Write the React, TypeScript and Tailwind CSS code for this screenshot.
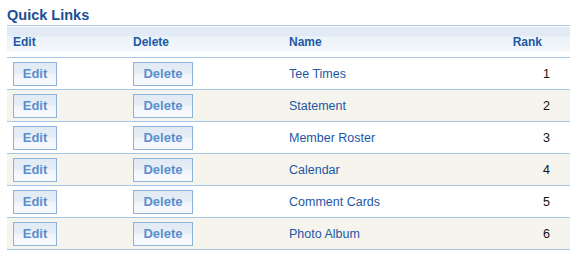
const LINKS = [
  { name: "Tee Times", rank: 1 },
  { name: "Statement", rank: 2 },
  { name: "Member Roster", rank: 3 },
  { name: "Calendar", rank: 4 },
  { name: "Comment Cards", rank: 5 },
  { name: "Photo Album", rank: 6 },
];

function GridButton({ label, width }: { label: string; width: string }) {
  return (
    <button
      className={`h-[24px] ${width} border border-[#8db3da] bg-[linear-gradient(#e1eaf5_0%,#e6edf6_45%,#f2f6fb_55%,#f7fafd_100%)] text-[13px] font-bold text-[#5b8fcd]`}
    >
      {label}
    </button>
  );
}

export default function App() {
  return (
    <div className="h-[260px] w-[570px] bg-white pl-[7px] font-['Liberation_Sans',Arial,sans-serif]">
      <h2 className="pt-[6px] text-[14.5px] leading-[19px] font-bold text-[#1b4f93]">Quick Links</h2>
      <table className="w-full border-collapse text-[12.5px]">
        <thead>
          <tr className="h-[32px] border-t border-b border-[#a7c6e4] bg-[linear-gradient(#e2ebf5_0px,#e2ebf5_9px,#edf3f9_10px,#f3f7fb_24px,#ffffff_25px,#ffffff_32px)] text-left text-[12px] font-bold text-[#1d58a5]">
            <th className="w-[126px] pt-[1px] pl-[6px] font-bold">Edit</th>
            <th className="w-[156px] pt-[1px] font-bold">Delete</th>
            <th className="pt-[1px] font-bold">Name</th>
            <th className="w-[80px] pt-[1px] pr-[28px] text-right font-bold">Rank</th>
          </tr>
        </thead>
        <tbody>
          {LINKS.map((link, idx) => (
            <tr
              key={link.name}
              className={`h-[32px] border-b border-[#a7c6e4] ${idx % 2 === 1 ? "bg-[#f5f4ed]" : "bg-white"}`}
            >
              <td className="pl-[6px] pt-[1px]">
                <GridButton label="Edit" width="w-[44px]" />
              </td>
              <td className="pt-[1px]">
                <GridButton label="Delete" width="w-[60px]" />
              </td>
              <td className="pt-[2px] text-[#1d58a5]">{link.name}</td>
              <td className="pt-[2px] pr-[20px] text-right text-[#111]">{link.rank}</td>
            </tr>
          ))}
        </tbody>
      </table>
    </div>
  );
}
